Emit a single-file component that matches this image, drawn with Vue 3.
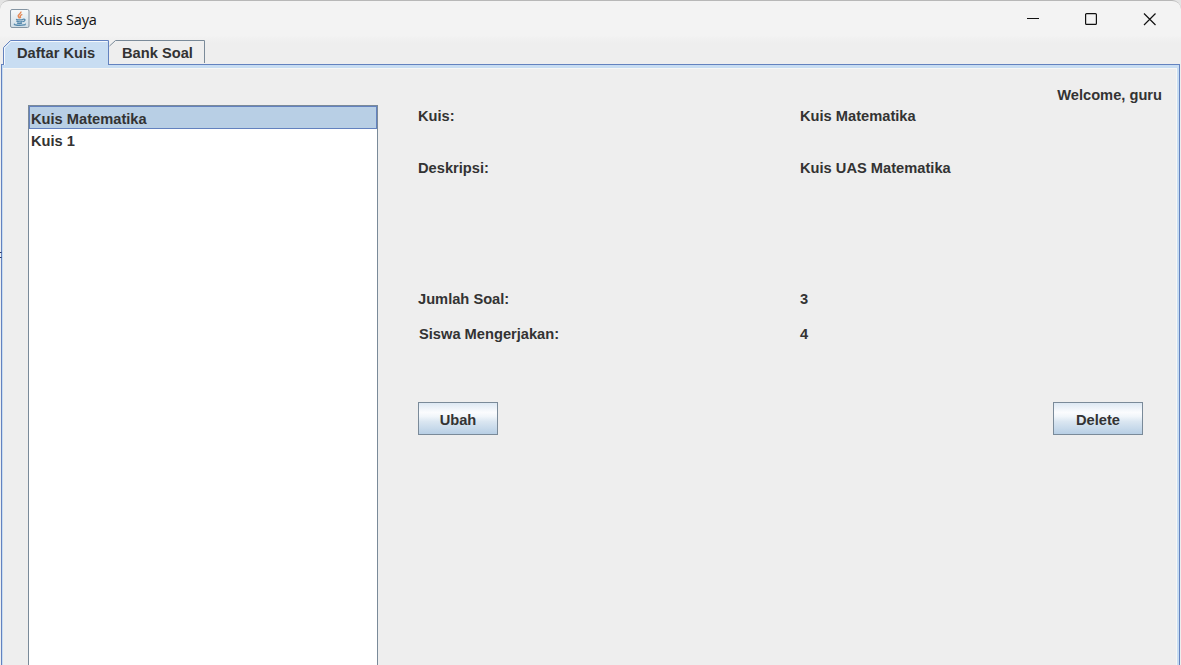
<script setup>
import { ref } from 'vue'

const quizzes = ['Kuis Matematika', 'Kuis 1']
const selected = ref(0)
const details = [
  { label: 'Kuis:', value: 'Kuis Matematika', kind: 'name' },
  { label: 'Deskripsi:', value: 'Kuis UAS Matematika', kind: 'description' },
  { label: 'Jumlah Soal:', value: '3', kind: 'count' },
  { label: 'Siswa Mengerjakan:', value: '4', kind: 'students' },
]
</script>

<template>
  <div class="backdrop">
    <div class="window">
      <header class="titlebar">
        <svg class="app-icon" width="20" height="20" viewBox="0 0 20 20">
          <defs>
            <linearGradient id="tile" x1="0" y1="0" x2="0" y2="1">
              <stop offset="0" stop-color="#f7f9fa" />
              <stop offset="1" stop-color="#cfdde6" />
            </linearGradient>
          </defs>
          <rect x=".5" y=".5" width="18.5" height="18" rx="1.5" fill="url(#tile)" stroke="#8494a2" />
          <path d="M10.7 2.5c1.4 2-3.6 3-2.4 5 .4.8 1.2 1.3 1.3 2M12.3 5.4c-2.4 1-2.6 2-1.6 3.6" fill="none" stroke="#e58a58" stroke-width="1.5" />
          <path d="M6 10.3c2 .7 5.4.7 7.2 0M6.4 12.2c1.9.8 4.5.8 6.2.1M7 14.2c1.6.5 3.6.5 5 0M13.2 10.2c2.600-.4 2.200 2-.3 2.500M4.700 14.700c-1.500 1 1.500 1.700 5 1.700s6.400-.6 5.300-1.600" fill="none" stroke="#5589ad" stroke-width="1.300" />
        </svg>
        <span class="title">Kuis Saya</span>
        <svg class="controls" width="130" height="14" viewBox="0 0 130 14" fill="none" stroke="#111" stroke-width="1.200">
          <path d="M0 6.500h12" />
          <rect x="58.600" y="1.600" width="10.800" height="10.800" rx="1" />
          <path d="M117 1.500l11.500 11.500M128.500 1.500l-11.500 11.500" />
        </svg>
      </header>

      <nav class="tabs">
        <div class="tab active">
          <svg class="tab-edge" width="106" height="28" viewBox="0 0 106 28">
            <path d="M1 28V7.500L7.500 1H105V28Z" fill="#c8ddf2" />
            <path d="M1.500 25V8L8 1.500H104.500" fill="none" stroke="#f5f9fd" />
            <path d="M.5 24V7.500L7.500.5H105.500V25" fill="none" stroke="#6382bf" />
          </svg>
          <span>Daftar Kuis</span>
        </div>
        <div class="tab idle">
          <svg class="tab-edge" width="96" height="25" viewBox="0 0 96 25">
            <path d="M.5 6L6.500.5H95.500V23" fill="none" stroke="#7a8a99" />
          </svg>
          <span>Bank Soal</span>
        </div>
      </nav>

      <main class="pane">
        <ul class="quiz-list">
          <li v-for="(quiz, i) in quizzes" :key="quiz" :class="{ selected: i === selected }" @click="selected = i">{{ quiz }}</li>
        </ul>
        <section class="content">
          <p class="welcome">Welcome, guru</p>
          <dl>
            <div v-for="item in details" :key="item.kind" class="detail" :class="item.kind">
              <dt>{{ item.label }}</dt>
              <dd>{{ item.value }}</dd>
            </div>
          </dl>
          <div class="actions">
            <button class="edit">Ubah</button>
            <button class="delete">Delete</button>
          </div>
        </section>
      </main>
    </div>
    <svg class="edge-mark" width="2" height="8" viewBox="0 0 2 8">
      <path d="M0 1.500h1.500M0 6.500h1.500" stroke="#27376b" />
    </svg>
  </div>
</template>

<style>
body {
  overflow: hidden;
}
</style>

<style scoped>
* {
  box-sizing: border-box;
}
.backdrop {
  position: relative;
  width: 1181px;
  height: 665px;
  overflow: hidden;
  background: linear-gradient(90deg, #b4c6e8 1px, transparent 1px) 0 65px no-repeat, #e4e4e4;
  color: #333;
  font: bold 14.67px/18px "Liberation Sans", Arial, sans-serif;
}
.edge-mark {
  position: absolute;
  top: 251px;
  left: 0;
}
.window {
  height: 665px;
  overflow: hidden;
  border-top: 1px solid #b7b7b7;
  border-radius: 9px 9px 0 0;
  background: linear-gradient(#f3f3f3 0 34px, #eee 42px);
}
.titlebar {
  display: flex;
  height: 39px;
  padding: 8px 24px 0 10px;
  align-items: flex-start;
}
.title {
  margin: 1px 0 0 5px;
  color: #111;
  font: 14.5px/20px "Open Sans", "Noto Sans", sans-serif;
  letter-spacing: -0.2px;
}
.controls {
  margin: 3px 0 0 auto;
}
.tabs {
  display: flex;
  height: 24px;
  padding-left: 3px;
}
.tab {
  position: relative;
  white-space: nowrap;
}
.tab span {
  position: relative;
}
.tab-edge {
  position: absolute;
  top: 0;
  left: 0;
}
.active {
  z-index: 1;
  width: 106px;
  height: 28px;
  padding: 4px 0 0 14px;
}
.idle {
  width: 96px;
  padding: 4px 0 0 13px;
}
.pane {
  display: flex;
  height: 604px;
  margin: 0 1px;
  padding: 37px 15px 0 25px;
  border: solid #c8ddf2;
  border-width: 4px 3px 0 2px;
  box-shadow: inset -1px 1px #f7f7f5;
  outline: 1px solid #6382bf;
  outline-offset: -1px;
}
.quiz-list {
  width: 350px;
  height: 563px;
  margin: 0;
  padding: 0;
  border: 1px solid #7a8a99;
  border-bottom: 0;
  background: #fff;
  list-style: none;
}
.quiz-list li {
  height: 22px;
  padding: 3px 2px 0;
}
.quiz-list .selected {
  height: 23px;
  padding: 3px 1px 0;
  border: 1px solid #6382bf;
  background: #b8cfe5;
}
.content {
  flex: 1;
  padding-left: 40px;
}
.welcome {
  height: 18px;
  margin: -19px 0 0;
  text-align: right;
}
dl {
  margin: 3px 0 0;
}
.detail {
  display: grid;
  grid-template-columns: 382px 1fr;
}
.name {
  height: 52px;
}
.description {
  height: 131px;
}
.count {
  height: 35px;
}
.students {
  height: 77px;
}
.students dt {
  padding-left: 1px;
}
dd {
  margin: 0;
}
.actions {
  display: flex;
  justify-content: space-between;
  padding-right: 19px;
}
button {
  height: 33px;
  padding: 3px 0 0;
  border: 1px solid #7a8a99;
  background: linear-gradient(#dde8f3, #fbfcfe 30%, #f0f5fa 44%, #dae6f1 60%, #b8cfe5);
  color: #333;
  font: inherit;
}
.edit {
  width: 80px;
}
.delete {
  width: 90px;
}
</style>
